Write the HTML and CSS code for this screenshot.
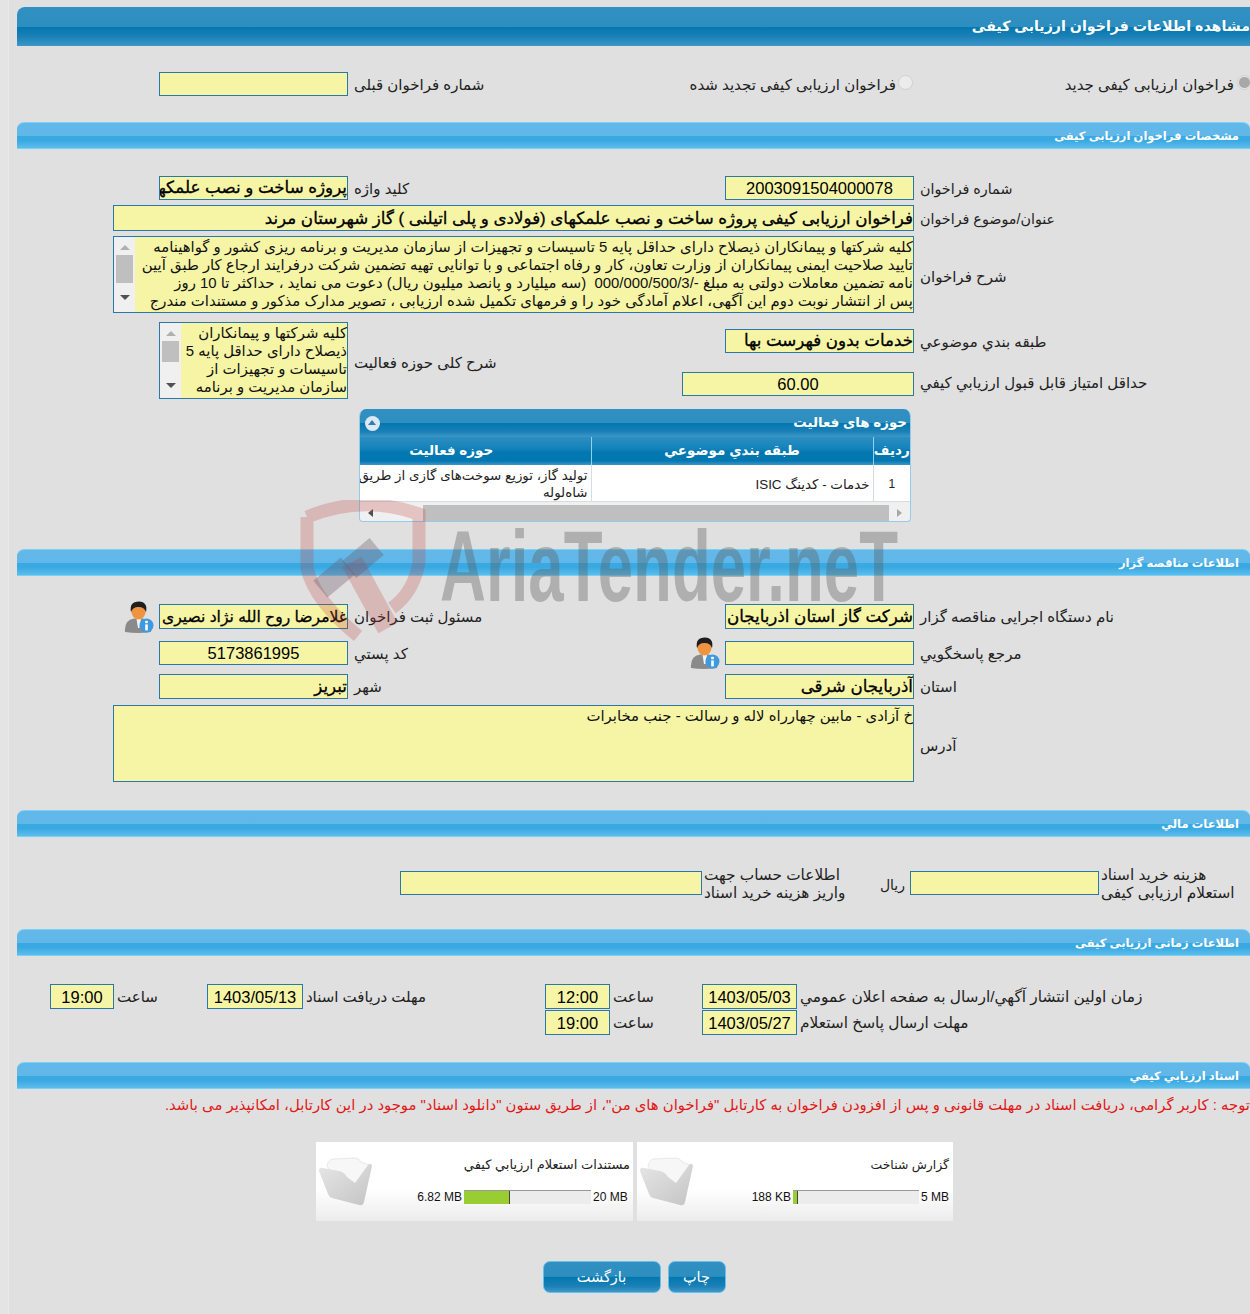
FILE: index.html
```html
<!DOCTYPE html>
<html lang="fa" dir="rtl">
<head>
<meta charset="utf-8">
<title>مشاهده اطلاعات فراخوان ارزیابی کیفی</title>
<link rel="stylesheet" href="styles.css">
</head>
<body>
<div class="page">
  <h1 class="title-bar">مشاهده اطلاعات فراخوان ارزیابی کیفی</h1>

  <div class="row mt26">
    <label class="radio-label"><span class="radio checked"></span>فراخوان ارزیابی کیفی جدید</label>
    <label class="radio-label"><span class="radio"></span>فراخوان ارزیابی کیفی تجدید شده</label>
    <div class="label">شماره فراخوان قبلی</div>
    <div class="field"></div>
  </div>

  <h2 class="section-bar mt26">مشخصات فراخوان ارزیابی کیفی</h2>

  <div class="row mt27">
    <div class="label lab-sm">شماره فراخوان</div>
    <div class="field center">2003091504000078</div>
    <div class="label">کلید واژه</div>
    <div class="field strong">پروژه ساخت و نصب علمکهای فولادی و پلی اتیلنی</div>
  </div>
  <div class="row mt5">
    <div class="label lab-sm">عنوان/موضوع فراخوان</div>
    <div class="field strong wide h26">فراخوان ارزیابی کیفی پروژه ساخت و نصب علمکهای (فولادی و پلی اتیلنی ) گاز شهرستان مرند</div>
  </div>
  <div class="row mt5">
    <div class="label low">شرح فراخوان</div>
    <div class="textbox wide h77">
      <div class="textbox-lines">کلیه شرکتها و پیمانکاران ذیصلاح دارای حداقل پایه 5 تاسیسات و تجهیزات از سازمان مدیریت و برنامه ریزی کشور و گواهینامه<br>تایید صلاحیت ایمنی پیمانکاران از وزارت تعاون، کار و رفاه اجتماعی و با توانایی تهیه تضمین شرکت درفرایند ارجاع کار طبق آیین<br>نامه تضمین معاملات دولتی به مبلغ <bdo dir="ltr">000/000/500/3/-</bdo>&nbsp; (سه میلیارد و پانصد میلیون ریال) دعوت می نماید ، حداکثر تا 10 روز<br>پس از انتشار نوبت دوم این آگهی، اعلام آمادگی خود را و فرمهای تکمیل شده ارزیابی ، تصویر مدارک مذکور و مستندات مندرج</div>
      <div class="scrollbar"><span class="arrow up"></span><span class="thumb t1"></span><span class="arrow down"></span></div>
    </div>
  </div>
  <div class="row pair mt9">
    <div class="label">طبقه بندي موضوعي</div>
    <div class="field strong">خدمات بدون فهرست بها</div>
    <div class="label span2 low">شرح کلی حوزه فعالیت</div>
    <div class="textbox narrow span2">
      <div class="textbox-lines">کلیه شرکتها و پیمانکاران<br>ذیصلاح دارای حداقل پایه 5<br>تاسیسات و تجهیزات از<br>سازمان مدیریت و برنامه</div>
      <div class="scrollbar"><span class="arrow up"></span><span class="thumb t2"></span><span class="arrow down"></span></div>
    </div>
    <div class="label top">حداقل امتياز قابل قبول ارزيابي كيفي</div>
    <div class="field center w232 top">60.00</div>
  </div>

  <div class="panel">
    <div class="panel-head"><span>حوزه های فعالیت</span><span class="collapse"></span></div>
    <table class="grid">
      <thead><tr><th class="c1">ردیف</th><th class="c2">طبقه بندي موضوعي</th><th>حوزه فعالیت</th></tr></thead>
      <tbody><tr><td class="num">1</td><td>خدمات - کدینگ ISIC</td><td>تولید گاز، توزیع سوخت‌های گازی از طریق<br>شاه‌لوله</td></tr></tbody>
    </table>
    <div class="hscroll"><span class="arrow right"></span><span class="hthumb"></span><span class="arrow left"></span></div>
  </div>

  <h2 class="section-bar mt27">اطلاعات مناقصه گزار</h2>

  <div class="row mt28">
    <div class="label">نام دستگاه اجرایی مناقصه گزار</div>
    <div class="field strong h25">شرکت گاز استان اذربایجان</div>
    <div class="label">مسئول ثبت فراخوان</div>
    <div class="with-icon">
      <div class="field strong h25 snug">غلامرضا روح الله نژاد نصیری</div>
      <svg class="person" viewBox="0 0 30 32"><use href="#person"/></svg>
    </div>
  </div>
  <div class="row mt12">
    <div class="label">مرجع پاسخگويي</div>
    <div class="with-icon">
      <div class="field"></div>
      <svg class="person" viewBox="0 0 30 32"><use href="#person"/></svg>
    </div>
    <div class="label">كد پستي</div>
    <div class="field center">5173861995</div>
  </div>
  <div class="row mt9">
    <div class="label">استان</div>
    <div class="field strong h25">آذربایجان شرقی</div>
    <div class="label">شهر</div>
    <div class="field strong h25">تبریز</div>
  </div>
  <div class="row mt6">
    <div class="label low">آدرس</div>
    <div class="textbox wide h77 plain"><div class="textbox-lines">خ آزادی - مابین چهارراه لاله و رسالت - جنب مخابرات</div></div>
  </div>

  <h2 class="section-bar mt28">اطلاعات مالي</h2>

  <div class="finance">
    <div class="label fin-one">هزینه خرید اسناد<br>استعلام ارزیابی کیفی</div>
    <div class="field"></div>
    <div class="label rial">ریال</div>
    <div class="label fin-two">اطلاعات حساب جهت<br>واریز هزینه خرید اسناد</div>
    <div class="field w302"></div>
  </div>

  <h2 class="section-bar mt27">اطلاعات زمانی ارزیابی کیفی</h2>

  <div class="times">
    <div class="label tight lab-lg">زمان اولین انتشار آگهي/ارسال به صفحه اعلان عمومي</div>
    <div class="field center full">1403/05/03</div>
    <div class="skip"></div>
    <div class="label tight">ساعت</div>
    <div class="field center full">12:00</div>
    <div class="skip"></div>
    <div class="label tight">مهلت دریافت اسناد</div>
    <div class="field center full">1403/05/13</div>
    <div class="skip"></div>
    <div class="label tight">ساعت</div>
    <div class="field center full">19:00</div>

    <div class="label tight lab-lg">مهلت ارسال پاسخ استعلام</div>
    <div class="field center full">1403/05/27</div>
    <div class="skip"></div>
    <div class="label tight">ساعت</div>
    <div class="field center full">19:00</div>
  </div>

  <h2 class="section-bar mt27">اسناد ارزیابي کیفي</h2>

  <p class="notice">توجه : کاربر گرامی، دریافت اسناد در مهلت قانونی و پس از افزودن فراخوان به کارتابل "فراخوان های من"، از طریق ستون "دانلود اسناد" موجود در این کارتابل، امکانپذیر می باشد.</p>

  <div class="cards">
    <div class="card">
      <div class="card-body">
        <div class="card-title">گزارش شناخت</div>
        <div class="quota">
          <span class="q-max q28">5 MB</span>
          <div class="bar"><span class="bar-fill" style="width:5px"></span></div>
          <span class="q-used">188 KB</span>
        </div>
      </div>
      <svg class="folder" viewBox="0 0 54 50"><use href="#folder"/></svg>
    </div>
    <div class="card">
      <div class="card-body">
        <div class="card-title">مستندات استعلام ارزیابي کیفي</div>
        <div class="quota">
          <span class="q-max q36">20 MB</span>
          <div class="bar"><span class="bar-fill" style="width:46px"></span></div>
          <span class="q-used">6.82 MB</span>
        </div>
      </div>
      <svg class="folder" viewBox="0 0 54 50"><use href="#folder"/></svg>
    </div>
  </div>

  <div class="actions">
    <button class="btn chap" type="button">چاپ</button>
    <button class="btn back" type="button">بازگشت</button>
  </div>
</div>

<svg class="watermark" viewBox="0 0 600 145" aria-hidden="true">
  <g class="wm-red">
    <path class="wm-shield" d="M7 17 Q62 -6 119 14 L119 62 Q114 92 92 108 M7 17 L7 68 Q14 100 58 136"/>
    <path class="wm-handle" d="M52 62 L88 128"/>
  </g>
  <g class="wm-gavel">
    <rect x="22" y="60" width="22" height="36" transform="rotate(50 34 79)"/>
    <rect x="50" y="42" width="22" height="36" transform="rotate(50 64 61)"/>
  </g>
  <text class="wm-text" x="140" y="101" textLength="458" lengthAdjust="spacingAndGlyphs">AriaTender.neT</text>
</svg>

<svg class="defs" aria-hidden="true">
  <defs>
    <linearGradient id="folderFront" x1="0" y1="0" x2="1" y2="1">
      <stop offset="0" stop-color="#e6e6e6"/>
      <stop offset="1" stop-color="#c4c4c4"/>
    </linearGradient>
    <g id="person">
      <path d="M1 31 Q0 19 10 17.5 L19 17.5 Q27 19 27 31 Q14 33 1 31Z" fill="#8a8a8a"/>
      <path d="M12.5 17.5 L17 17.5 L15.5 27 L14 27Z" fill="#f4f4f4"/>
      <ellipse cx="14.5" cy="10" rx="7.2" ry="8.5" fill="#ef9340"/>
      <path d="M7 11 Q5 0.5 15 0.5 Q24 1 22 11 Q20 5.5 14 6 Q9 6 7 11Z" fill="#1e1e1e"/>
      <circle cx="22.5" cy="24.5" r="7" fill="#3d9ae0"/>
      <rect x="21.2" y="23.4" width="2.6" height="6" fill="#fff"/>
      <rect x="21.2" y="19.8" width="2.6" height="2.4" fill="#fff"/>
    </g>
    <g id="folder">
      <path d="M8 9 Q9 3 14 2 L36 1 Q40 1 42 5 L50 8 L42 30 L20 28Z" fill="#f7f7f7" stroke="#dcdcdc" stroke-width="0.6"/>
      <path d="M0 14 Q0 10 4 11 L20 14 Q25 15 28 20 L36 26 L49 8 Q52 5 53 9 L45 45 Q44 49 40 48 L13 41 Q10 40 9 37Z" fill="url(#folderFront)"/>
    </g>
  </defs>
</svg>
</body>
</html>
```
FILE: styles.css
```css
* { box-sizing: border-box; }
html, body { margin: 0; padding: 0; }
body {
  background: #e4e4e4;
  color: #111;
  font-family: "Liberation Sans", "DejaVu Sans", sans-serif;
  font-size: 14px;
  overflow-x: hidden;
  position: relative;
  min-height: 1314px;
}
.page {
  margin-left: 8px;
  border-left: 1px solid #e9e9e9;
  padding: 7px 0 20px 8px;
  background: #e0e0e0;
  min-height: 1314px;
}
.title-bar {
  margin: 0;
  height: 39px;
  line-height: 39px;
  border-radius: 8px 0 0 0;
  background: linear-gradient(#3190c1 0, #2d8ebf 50%, #0377b0 51%, #1a80b5 75%, #3e97c9 100%);
  color: #fff;
  font-size: 14.2px;
  font-weight: bold;
  white-space: nowrap;
  overflow: hidden;
}
.section-bar {
  margin: 0;
  height: 27px;
  line-height: 27px;
  border-top: 1px solid #7cd2f4;
  border-bottom: 1px solid #78d0f5;
  border-radius: 7px 7px 0 0;
  padding-right: 11px;
  background: linear-gradient(#62b9e9 0, #60b7e8 50%, #38a9e2 51%, #3aa9e2 70%, #5cbdec 100%);
  color: #fff;
  font-size: 11.5px;
  font-weight: bold;
}
.mt5 { margin-top: 5px; }
.mt6 { margin-top: 6px; }
.mt9 { margin-top: 9px; }
.mt12 { margin-top: 12px; }
.mt26 { margin-top: 26px; }
.mt27 { margin-top: 27px; }
.mt28 { margin-top: 28px; }

.row {
  display: grid;
  grid-template-columns: 336px 266px 300px 331px;
  align-items: center;
}
.pair { grid-template-rows: 38px 27px; row-gap: 12px; }
.span2 { grid-row: span 2; }
.top { align-self: start; }
.label {
  text-align: left;
  padding-left: 6px;
  padding-top: 1px;
  font-size: 15px;
  line-height: 18px;
  color: #222;
  white-space: nowrap;
}
.label.top { line-height: 20px; }
.label.low { padding-top: 5px; }
.label.lab-sm { font-size: 14.3px; }
.label.lab-lg { font-size: 15.4px; }
.field {
  justify-self: start;
  width: 189px;
  height: 24px;
  line-height: 22px;
  border: 1px solid #2a78a8;
  background: #f6f5a6;
  color: #000;
  font-size: 13px;
  white-space: nowrap;
  overflow: hidden;
}
.center { text-align: center; font-size: 16.5px; direction: ltr; }
.strong { font-size: 16.7px; -webkit-text-stroke: 0.3px #000; }
.snug { font-size: 15.6px; }
.wide { grid-column: 2 / span 3; width: 801px; }
.w232 { width: 232px; }
.w302 { width: 302px; }
.h25 { height: 25px; line-height: 24px; }
.h26 { height: 26px; line-height: 25px; }
.h77 { height: 77px; }
.textbox {
  justify-self: start;
  border: 1px solid #2a78a8;
  background: #f6f5a6;
  display: flex;
  justify-content: space-between;
  overflow: hidden;
}
.narrow { width: 189px; height: 77px; }
.textbox-lines {
  flex: 1;
  font-size: 14.9px;
  line-height: 18px;
  white-space: nowrap;
  color: #111;
  overflow: hidden;
  padding-top: 1px;
}
.textbox-lines bdo { letter-spacing: 1.5px; }
.scrollbar {
  width: 21px;
  flex: none;
  background: #f0f0f0;
  display: flex;
  flex-direction: column;
  align-items: center;
  padding: 8px 0;
}
.thumb { width: 17px; background: #bfbfbf; }
.t1 { height: 28px; margin: 5px 0; }
.t2 { height: 21px; margin: 5px 0 14px; }
.arrow { width: 0; height: 0; display: block; border-style: solid; }
.arrow.up { border-width: 0 5px 5px; border-color: transparent transparent #b0b0b0; }
.arrow.down { border-width: 5px 5px 0; border-color: #505050 transparent transparent; margin-top: 7px; }
.arrow.left { border-width: 4px 5px 4px 0; border-color: transparent #505050 transparent transparent; }
.arrow.right { border-width: 4px 0 4px 5px; border-color: transparent transparent transparent #a8a8a8; }

.radio-label {
  display: flex;
  align-items: center;
  font-size: 15px;
  padding-top: 1px;
  color: #222;
  white-space: nowrap;
}
.radio {
  width: 15px;
  height: 15px;
  border-radius: 50%;
  border: 1px solid #cfcfcf;
  background: #ececec;
  margin: -5px 1px 0 2px;
  flex: none;
}
.radio.checked { background: radial-gradient(#a8a8a8 0 5px, #e6e6e6 6px); margin-right: -2px; margin-left: 3px; }

.panel {
  margin: 10px 339px 0 0;
  width: 552px;
  height: 113px;
  border: 1px solid #94cbea;
  border-top: 0;
  border-radius: 7px 7px 4px 4px;
  background: #f0f0f0;
  overflow: hidden;
}
.panel-head {
  height: 28px;
  background: linear-gradient(#3190c1 0, #2d8ebf 50%, #0377b0 51%, #1a80b5 80%, #3e97c9 100%);
  color: #fff;
  font-size: 13.4px;
  font-weight: bold;
  line-height: 28px;
  padding: 0 3px 0 5px;
  display: flex;
  justify-content: space-between;
  align-items: center;
}
.collapse {
  width: 15px;
  height: 15px;
  border-radius: 50%;
  background: #dce8f4;
  position: relative;
}
.collapse::after {
  content: "";
  position: absolute;
  left: 3px;
  top: 4px;
  border-style: solid;
  border-width: 0 4.5px 5px;
  border-color: transparent transparent #2d7fb4;
}
.grid {
  width: 598px;
  border-collapse: collapse;
  table-layout: fixed;
  background: #fff;
}
.grid th {
  height: 28px;
  padding: 0 0 2px;
  background: linear-gradient(#2d8ebf 0, #1483bb 40%, #0377b0 55%, #0377b0 85%, #3e97c9 100%);
  color: #fff;
  font-size: 13.5px;
  font-weight: bold;
  border-left: 1px solid #8fd3f4;
}
.grid th:last-child { border-left: 0; }
.c1 { width: 37px; }
.c2 { width: 282px; }
.grid td {
  height: 35px;
  padding: 2px 3px 0 0;
  font-size: 13.4px;
  line-height: 17px;
  color: #222;
  text-align: right;
  border-left: 1px solid #d5dde2;
  border-bottom: 1px solid #d5dde2;
  white-space: nowrap;
  overflow: hidden;
}
.grid td:last-child { border-left: 0; }
.grid td.num { text-align: center; padding: 2px 0 0; font-size: 12px; }
.hscroll {
  height: 22px;
  display: flex;
  align-items: center;
  padding: 0 8px 0 0;
}
.hthumb { width: 466px; height: 17px; background: #bfbfbf; margin: 0 8px 0 50px; }

.with-icon { display: flex; align-items: center; gap: 5px; justify-self: start; }
.person { width: 30px; height: 32px; margin: -4px 0; flex: none; }

.finance { display: flex; align-items: center; margin-top: 29px; height: 36px; }
.fin-one { width: 149px; padding: 0; font-size: 15.3px; }
.finance > .field { margin: -2px 2px 0 0; }
.rial { width: 44px; padding: 1px 5px 0 0; text-align: right; font-size: 14px; }
.fin-two { width: 164px; padding: 0 0 0 2px; font-size: 15.3px; }
.finance > .field.w302 { margin: -2px 0 0; }

.times {
  display: grid;
  grid-template-columns: 453px 95px 48px 44px 65px 119px 123px 96px 48px 45px 64px;
  grid-auto-rows: 25px;
  row-gap: 1px;
  margin-top: 28px;
  align-items: center;
}
.tight { padding-left: 3px; }
.full { width: 100%; height: 25px; line-height: 24px; }
.notice {
  margin: 7px 0 0;
  color: #e01818;
  font-size: 14.85px;
  line-height: 18px;
  white-space: nowrap;
  overflow: hidden;
}
.cards { display: flex; gap: 4px; margin: 28px 297px 0 0; }
.card {
  width: 316px;
  height: 79px;
  background: linear-gradient(#fff 0, #fff 60%, #ececec 100%);
  display: flex;
  justify-content: space-between;
  padding: 0 4px 0 3px;
}
.card + .card { width: 317px; padding-right: 5px; }
.card + .card .bar { width: 127px; }
.card-title {
  margin-top: 14px;
  font-size: 12.4px;
  line-height: 18px;
  color: #222;
  height: 34px;
}
.card + .card .card-title { font-size: 13px; margin-right: -2px; }
.quota { display: flex; align-items: center; gap: 2px; height: 14px; }
.q-max, .q-used { font-size: 12px; direction: ltr; white-space: nowrap; color: #111; }
.q28 { width: 28px; }
.q36 { width: 35px; }
.bar {
  width: 126px;
  height: 14px;
  background: #ececec;
  border-top: 1px solid #999;
  display: flex;
  justify-content: flex-end;
}
.bar-fill { display: block; height: 13px; background: #9acd32; border-right: 1px solid #444; }
.folder { width: 54px; height: 50px; margin-top: 15px; flex: none; }

.actions { display: flex; justify-content: center; gap: 7px; margin-top: 40px; padding-left: 1px; }
.btn {
  height: 32px;
  border: 1px solid #63c1ec;
  border-radius: 7px;
  background: linear-gradient(#3190c1 0, #2d8ebf 48%, #0377b0 50%, #1a80b5 80%, #3e97c9 100%);
  color: #fff;
  font-family: inherit;
  font-size: 14.5px;
  padding: 0;
}
.chap { width: 58px; }
.back { width: 118px; }

.watermark {
  position: absolute;
  left: 300px;
  top: 500px;
  width: 600px;
  height: 145px;
  pointer-events: none;
}
.wm-shield { fill: none; stroke: rgba(190, 60, 60, 0.25); stroke-width: 13; }
.wm-handle { fill: none; stroke: rgba(190, 60, 60, 0.25); stroke-width: 22; }
.wm-gavel rect { fill: rgba(110, 90, 110, 0.35); }
.wm-text {
  font-family: "Liberation Sans", sans-serif;
  font-weight: bold;
  font-size: 100px;
  fill: rgba(90, 90, 90, 0.36);
  direction: ltr;
}
.defs { position: absolute; width: 0; height: 0; }
```
